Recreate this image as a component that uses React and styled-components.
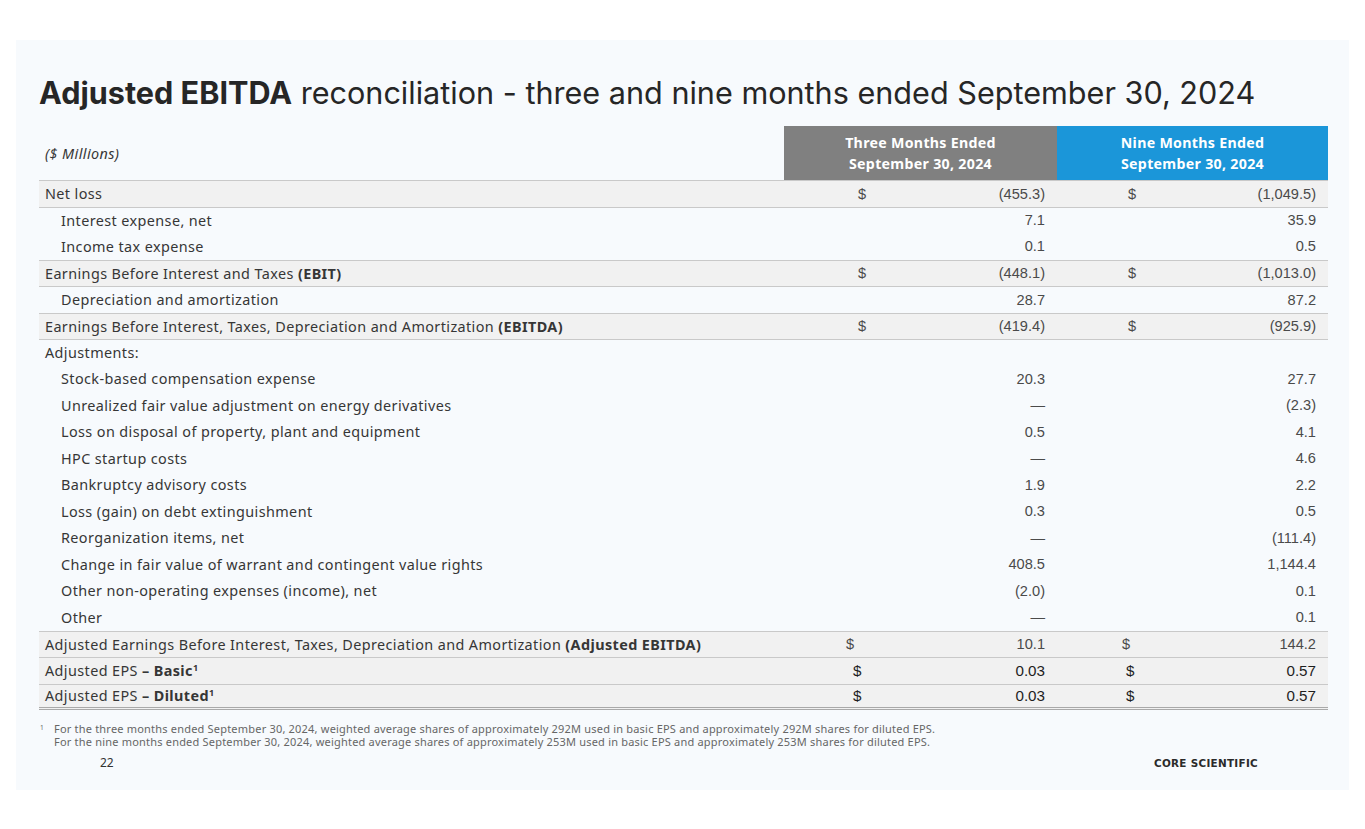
import React from 'react';
import styled, { createGlobalStyle } from 'styled-components';

const GlobalStyle = createGlobalStyle`
	body {
		margin: 0;
		background: #ffffff;
		font-family: "Noto Sans", "Liberation Sans", sans-serif;
	}
`

const Slide = styled.div`
	box-sizing: border-box;
	width: 1333px;
	height: 750px;
	margin: 40px 0 0 16px;
	background: #f7fafd;
	padding: 36px 21px 0 23px;
	display: flex;
	flex-direction: column;
`

const Title = styled.h1`
	margin: 0;
	font-family: Inter, "Liberation Sans", sans-serif;
	font-size: 30.6px;
	line-height: 34px;
	font-weight: 400;
	color: #262626;
	b {
		font-weight: 700;
	}
`

const Table = styled.div`
	margin-top: 16px;
	display: flex;
	flex-direction: column;
`

const Row = styled.div`
	box-sizing: border-box;
	display: grid;
	grid-template-columns: 745px 273px 271px;
	height: ${p => p.$h || '26.5px'};
	background: ${p => p.$shade ? '#f1f1f1' : 'transparent'};
	border-top: ${p => p.$line ? '1px solid #c9c9c9' : 'none'};
	border-bottom: ${p => p.$last ? '3px double #a9a9a9' : 'none'};
`

const Label = styled.div`
	display: flex;
	align-items: center;
	padding-left: ${p => p.$indent ? '22px' : '6px'};
	font-size: 14.4px;
	letter-spacing: 0.4px;
	color: #363636;
	white-space: nowrap;
	font-style: ${p => p.$italic ? 'italic' : 'normal'};
	b {
		font-weight: 700;
	}
	sup {
		font-size: 9px;
		line-height: 0;
		vertical-align: 5px;
	}
`

const Head = styled.div`
	display: flex;
	align-items: center;
	justify-content: center;
	text-align: center;
	background: ${p => p.$color};
	color: #fff;
	font-weight: 700;
	font-size: 14.2px;
	letter-spacing: 0.3px;
	line-height: 21px;
`

const Cell = styled.div`
	display: flex;
	align-items: center;
	justify-content: space-between;
	padding: 0 12px 0 ${p => p.$pad}px;
	font-family: "Liberation Sans", Arial, sans-serif;
	font-size: ${p => p.$eps ? '15.2px' : '14.6px'};
	color: ${p => p.$eps ? '#1e1e1e' : '#4a4a4a'};
`

const Foot = styled.div`
	margin-top: 12px;
	padding-left: 1px;
	font-size: 11px;
	letter-spacing: 0.2px;
	line-height: 13px;
	color: #666;
	display: grid;
	grid-template-columns: 14px auto;
`

const FootMark = styled.span`
	font-size: 6.5px;
	line-height: 10px;
	padding-top: 1px;
`

const Bottom = styled.div`
	display: flex;
	align-items: center;
	justify-content: space-between;
	margin-top: 6px;
	padding: 0 70px 0 61px;
`

const PageNo = styled.span`
	font-size: 12px;
	color: #333;
`

const Logo = styled.span`
	font-family: "DejaVu Sans", sans-serif;
	font-weight: 700;
	font-size: 10.4px;
	letter-spacing: 0.3px;
	color: #2a2a2a;
`

const rows = [
	{ l: 'Net loss', a: '(455.3)', b: '(1,049.5)', s: true, d: true },
	{ l: 'Interest expense, net', a: '7.1', b: '35.9', i: true },
	{ l: 'Income tax expense', a: '0.1', b: '0.5', i: true },
	{ l: <>Earnings Before Interest and Taxes <b>(EBIT)</b></>, a: '(448.1)', b: '(1,013.0)', s: true, d: true },
	{ l: 'Depreciation and amortization', a: '28.7', b: '87.2', i: true },
	{ l: <>Earnings Before Interest, Taxes, Depreciation and Amortization <b>(EBITDA)</b></>, a: '(419.4)', b: '(925.9)', s: true, d: true },
	{ l: 'Adjustments:' },
	{ l: 'Stock-based compensation expense', a: '20.3', b: '27.7', i: true },
	{ l: 'Unrealized fair value adjustment on energy derivatives', a: '—', b: '(2.3)', i: true },
	{ l: 'Loss on disposal of property, plant and equipment', a: '0.5', b: '4.1', i: true },
	{ l: 'HPC startup costs', a: '—', b: '4.6', i: true },
	{ l: 'Bankruptcy advisory costs', a: '1.9', b: '2.2', i: true },
	{ l: 'Loss (gain) on debt extinguishment', a: '0.3', b: '0.5', i: true },
	{ l: 'Reorganization items, net', a: '—', b: '(111.4)', i: true },
	{ l: 'Change in fair value of warrant and contingent value rights', a: '408.5', b: '1,144.4', i: true },
	{ l: 'Other non-operating expenses (income), net', a: '(2.0)', b: '0.1', i: true },
	{ l: 'Other', a: '—', b: '0.1', i: true },
	{ l: <>Adjusted Earnings Before Interest, Taxes, Depreciation and Amortization <b>(Adjusted EBITDA)</b></>, a: '10.1', b: '144.2', s: true, d: true, p: [62, 65] },
	{ l: <>Adjusted EPS <b>– Basic<sup>1</sup></b></>, a: '0.03', b: '0.57', s: true, d: true, e: true, p: [69, 69] },
	{ l: <>Adjusted EPS <b>– Diluted<sup>1</sup></b></>, a: '0.03', b: '0.57', s: true, d: true, e: true, p: [69, 69], last: true },
]

export default function App() {
	return (
		<>
			<GlobalStyle />
			<Slide>
				<Title><b>Adjusted EBITDA</b> reconciliation - three and nine months ended September 30, 2024</Title>
				<Table>
					<Row $h="54px">
						<Label $italic><span>($ Millions)</span></Label>
						<Head $color="#808080">Three Months Ended<br />September 30, 2024</Head>
						<Head $color="#1b96d9">Nine Months Ended<br />September 30, 2024</Head>
					</Row>
					{rows.map((r, n) => {
						const prevShade = n === 0 || rows[n - 1].s;
						const pad = r.p || [74, 71];
						return (
							<Row key={n} $shade={r.s} $line={r.s || prevShade} $last={r.last}>
								<Label $indent={r.i}><span>{r.l}</span></Label>
								<Cell $pad={pad[0]} $eps={r.e}>
									<span>{r.d ? '$' : ''}</span>
									<span>{r.a}</span>
								</Cell>
								<Cell $pad={pad[1]} $eps={r.e}>
									<span>{r.d ? '$' : ''}</span>
									<span>{r.b}</span>
								</Cell>
							</Row>
						);
					})}
				</Table>
				<Foot>
					<FootMark>1</FootMark>
					<span>For the three months ended September 30, 2024, weighted average shares of approximately 292M used in basic EPS and approximately 292M shares for diluted EPS.</span>
					<span></span>
					<span>For the nine months ended September 30, 2024, weighted average shares of approximately 253M used in basic EPS and approximately 253M shares for diluted EPS.</span>
				</Foot>
				<Bottom>
					<PageNo>22</PageNo>
					<Logo>CORE SCIENTIFIC</Logo>
				</Bottom>
			</Slide>
		</>
	);
}
